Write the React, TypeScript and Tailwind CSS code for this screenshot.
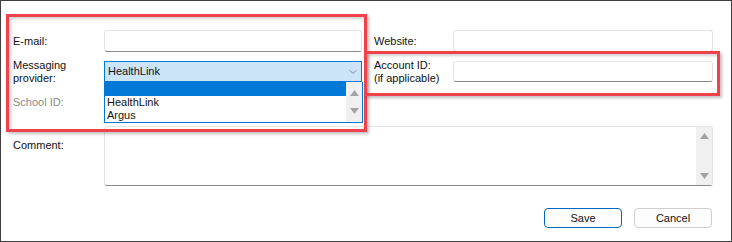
import { ChevronDown } from "lucide-react";

const font = { fontFamily: '"Liberation Sans", Arial, sans-serif' };

function TextBox({ className = "" }: { className?: string }) {
  return (
    <div
      className={`bg-white border border-[#e5e5e5] border-b-[#8a8a8a] rounded-[3px] ${className}`}
    />
  );
}

function Arrow({ up }: { up?: boolean }) {
  return (
    <svg width="9" height="6" viewBox="0 0 9 6">
      <path d={up ? "M0 6 L4.5 0 L9 6 Z" : "M0 0 L4.5 6 L9 0 Z"} fill="#a3a3a3" />
    </svg>
  );
}

function Annotation({ className }: { className: string }) {
  return (
    <div
      className={`absolute border-[3px] border-[#ef424a] shadow-[2px_2px_3px_rgba(0,0,0,0.25),inset_2px_2px_3px_rgba(0,0,0,0.18)] pointer-events-none ${className}`}
    />
  );
}

export default function App() {
  return (
    <div
      className="relative w-[732px] h-[242px] bg-white border border-[#404040] text-[11px] text-[#111] overflow-hidden"
      style={font}
    >
      <div className="pl-[12px] pt-[29px] grid grid-cols-[91px_258px_12px_79px_260px]">
        {/* row 1 */}
        <div className="h-[22px] flex items-center">E-mail:</div>
        <TextBox className="h-[22px]" />
        <div />
        <div className="h-[22px] flex items-center">Website:</div>
        <TextBox className="h-[22px]" />

        {/* row 2 */}
        <div className="mt-[9px] h-[21px] flex flex-col justify-center leading-[13px]">
          <span>Messaging</span>
          <span>provider:</span>
        </div>
        <div className="mt-[9px] h-[21px] bg-[#cce4f7] border border-[#0078d7] flex items-center justify-between pl-[3px] pr-[2px]">
          <span>HealthLink</span>
          <ChevronDown size={12} strokeWidth={1.3} className="text-[#555]" />
        </div>
        <div />
        <div className="mt-[9px] h-[21px] flex flex-col justify-center leading-[13px]">
          <span>Account ID:</span>
          <span>(if applicable)</span>
        </div>
        <TextBox className="mt-[9px] h-[21px]" />

        {/* row 3 */}
        <div className="h-[40px] flex items-center text-[#8a8a8a]">School ID:</div>
        <div />
        <div />
        <div />
        <div />

        {/* comment */}
        <div className="mt-[4px] pt-[13px] leading-[13px]">Comment:</div>
        <div className="col-span-4 mt-[4px] h-[60px] flex bg-white border border-[#e5e5e5] border-b-[#8a8a8a] rounded-[3px]">
          <div className="flex-1" />
          <div className="w-[16px] bg-[#f0f0f0] flex flex-col items-center justify-between py-[6px]">
            <Arrow up />
            <Arrow />
          </div>
        </div>
      </div>

      <div className="flex justify-end gap-[12px] pr-[19px] mt-[22px]">
        <button className="w-[78px] h-[20px] bg-[#fdfdfd] border border-[#0067c0] rounded-[4px] text-[11px] leading-none">
          Save
        </button>
        <button className="w-[78px] h-[20px] bg-[#fdfdfd] border border-[#cfcfcf] rounded-[4px] text-[11px] leading-none">
          Cancel
        </button>
      </div>

      {/* open dropdown list */}
      <div className="absolute left-[103px] top-[81px] w-[259px] h-[41px] bg-white border border-t-0 border-[#0078d7] flex">
        <div className="flex-1 flex flex-col leading-[13px]">
          <div className="h-[14px] bg-[#0078d7]" />
          <div className="pl-[2px]">HealthLink</div>
          <div className="pl-[2px]">Argus</div>
        </div>
        <div className="w-[16px] bg-[#f0f0f0] flex flex-col items-center justify-between py-[8px]">
          <Arrow up />
          <Arrow />
        </div>
      </div>

      <Annotation className="left-[5px] top-[13px] w-[361px] h-[118px]" />
      <Annotation className="left-[363px] top-[50px] w-[356px] h-[45px]" />
    </div>
  );
}
